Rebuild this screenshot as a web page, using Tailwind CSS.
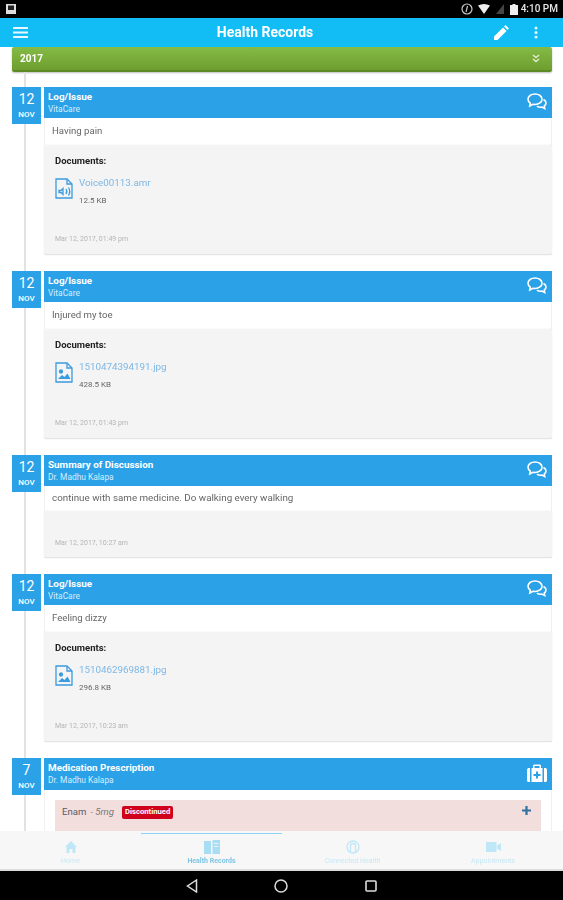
<!DOCTYPE html>
<html lang="en">
<head>
  <meta charset="UTF-8">
  <meta name="viewport" content="width=device-width, initial-scale=1.0">
  <title>Health Records</title>
  <script src="https://cdn.jsdelivr.net/npm/@tailwindcss/browser@4"></script>
</head>
<body class="bg-white overflow-hidden">
<div class="w-[563px] h-[900px] flex flex-col overflow-hidden font-['Roboto',sans-serif] text-[#555] blur-[0.5px]">

  <!-- status bar -->
  <div class="h-[18px] shrink-0 bg-black flex items-center justify-between pl-[5px] pr-[5px]">
    <svg width="12" height="12" viewBox="0 0 12 12"><path d="M1 1h10v10H1z" fill="#ddd"/><path d="M3 2.500h6v4.500H3z" fill="#222"/></svg>
    <div class="flex items-center text-[#e6e6e6]">
      <svg width="12" height="12" viewBox="0 0 12 12" fill="none" stroke="#ccc"><circle cx="6" cy="6" r="5" stroke-width="1.200"/><path d="M6.500 3 5 9" stroke-width="1.200"/></svg>
      <svg class="ml-[5px]" width="12" height="10" viewBox="0 0 12 10"><path d="M0 1.500Q6-1.500 12 1.500L6 10z" fill="#eee"/></svg>
      <svg class="ml-[6px]" width="8" height="10" viewBox="0 0 8 10"><path d="M0 10 8 0v10z" fill="#444"/></svg>
      <svg class="ml-[6px]" width="8" height="11" viewBox="0 0 8 11"><path d="M2.500 0h3v1H8v10H0V1h2.500z" fill="#eee"/></svg>
      <span class="ml-[3px] text-[10px] font-medium leading-none">4:10 PM</span>
    </div>
  </div>

  <!-- app bar -->
  <div class="h-[29px] shrink-0 bg-[#12bdf6] flex items-center pl-[13px] pr-[25px] relative">
    <svg width="15" height="11" viewBox="0 0 15 11" fill="#e8f8fe"><path d="M0 0h15v2H0zM0 4.500h15v2H0zM0 9h15v2H0z"/></svg>
    <div class="flex-1 text-center text-white font-bold text-[14px] pl-[8px]">Health Records</div>
    <svg width="15" height="15" viewBox="0 0 15 15" fill="#fff"><path d="M0 15V11.500L9 2.500 12.500 6 3.500 15zM10 1.500 11.500 0 15 3.500 13.500 5z"/></svg>
    <svg class="ml-[25px]" width="4" height="13" viewBox="0 0 4 13" fill="#e8f8fe"><circle cx="2" cy="2" r="1.500"/><circle cx="2" cy="6.500" r="1.500"/><circle cx="2" cy="11" r="1.500"/></svg>
  </div>

  <!-- scroll area -->
  <div class="flex-1 min-h-0 overflow-hidden pl-[12px] pr-[11px] relative">
    <div class="h-[25px] rounded-[2px] bg-gradient-to-b from-[#86bb46] to-[#6d9e2e] border-b-2 border-[#5d8a26] flex items-center justify-between pl-[8px] pr-[12px] shadow-[0_1px_2px_rgba(0,0,0,0.25)]">
      <span class="text-white text-[10px] font-bold">2017</span>
      <svg width="8" height="9" viewBox="0 0 8 9" fill="none" stroke="#dfeccb" stroke-width="1.500"><path d="M1 1l3 2.500L7 1M1 5l3 2.500L7 5"/></svg>
    </div>

    <div class="relative pt-[15px] flex flex-col gap-[16px]">
      <div class="absolute left-[12px] top-0 bottom-0 w-[2px] bg-[#e2e2e2]"></div>

      <!-- Voice note -->
      <div class="relative flex gap-[3px]">
        <div class="w-[29px] h-[37px] shrink-0 bg-[#2ba1e8] text-white flex flex-col items-center leading-none"><span class="text-[14px] mt-[5px]">12</span><span class="text-[8px] font-medium mt-[5px]">NOV</span></div>
        <div class="flex-1 min-w-0">
          <div class="h-[31px] bg-[#2ba1e8] flex items-center justify-between pl-[4px] pr-[5px] text-white">
            <div class="leading-none"><div class="text-[9.9px] font-bold">Log/Issue</div><div class="text-[8.4px] mt-[3px] text-[#d7eefc]">VitaCare</div></div>
            <svg class="mb-[2px]" width="20" height="17" viewBox="0 0 20 17" fill="none" stroke="#fff" stroke-width="1.600"><path d="M8 1C4 1 1 3.300 1 6.200c0 1.600 1 3 2.300 4L2.800 13l3.200-1.700c.7.100 1.300.2 2 .2 4 0 7-2.400 7-5.300S12 1 8 1z"/><path d="M16.500 6.500c1.500.8 2.500 2 2.500 3.500 0 1.200-.7 2.300-1.700 3l.4 2.500-2.800-1.400c-1.800.3-3.700-.1-5-1"/></svg>
          </div>
          <div class="h-[27px] bg-white flex items-center pl-[7px] text-[9.6px] text-[#666] border-x border-[#f0f0f0]">Having pain</div>
          <div class="h-[110px] bg-[#f4f4f4] rounded-b-[2px] border-b border-[#e4e4e4] pl-[11px] flex flex-col shadow-[0_0_1px_rgba(0,0,0,0.2)]">
            <div class="text-[9.5px] font-bold text-[#222] mt-[11px] leading-none">Documents:</div>
            <div class="flex mt-[12px]">
              <svg width="18" height="21" viewBox="0 0 18 21" fill="none" stroke="#3b9be0" stroke-width="1.300"><path d="M1 1h11l5 5v14H1z"/><path d="M12 1v5h5"/><path d="M4 12.500h2l2-2v6l-2-2H4zM11 11c1 1.500 1 3.500 0 5M13.500 9.500c1.500 2.500 1.500 5.500 0 8"/></svg>
              <div class="ml-[6px] leading-none"><div class="text-[9.8px] text-[#7db7e6]">Voice00113.amr</div><div class="text-[8px] text-[#666] mt-[10px]">12.5 KB</div></div>
            </div>
            <div class="text-[7px] text-[#b4b4b4] mt-[31px] leading-none">Mar 12, 2017, 01:49 pm</div>
          </div>
        </div>
      </div>

      <!-- Toe -->
      <div class="relative flex gap-[3px]">
        <div class="w-[29px] h-[37px] shrink-0 bg-[#2ba1e8] text-white flex flex-col items-center leading-none"><span class="text-[14px] mt-[5px]">12</span><span class="text-[8px] font-medium mt-[5px]">NOV</span></div>
        <div class="flex-1 min-w-0">
          <div class="h-[31px] bg-[#2ba1e8] flex items-center justify-between pl-[4px] pr-[5px] text-white">
            <div class="leading-none"><div class="text-[9.9px] font-bold">Log/Issue</div><div class="text-[8.4px] mt-[3px] text-[#d7eefc]">VitaCare</div></div>
            <svg class="mb-[2px]" width="20" height="17" viewBox="0 0 20 17" fill="none" stroke="#fff" stroke-width="1.600"><path d="M8 1C4 1 1 3.300 1 6.200c0 1.600 1 3 2.300 4L2.800 13l3.200-1.700c.7.100 1.300.2 2 .2 4 0 7-2.400 7-5.300S12 1 8 1z"/><path d="M16.500 6.500c1.500.8 2.500 2 2.500 3.500 0 1.200-.7 2.300-1.700 3l.4 2.500-2.800-1.400c-1.800.3-3.700-.1-5-1"/></svg>
          </div>
          <div class="h-[27px] bg-white flex items-center pl-[7px] text-[9.6px] text-[#666] border-x border-[#f0f0f0]">Injured my toe</div>
          <div class="h-[110px] bg-[#f4f4f4] rounded-b-[2px] border-b border-[#e4e4e4] pl-[11px] flex flex-col shadow-[0_0_1px_rgba(0,0,0,0.2)]">
            <div class="text-[9.5px] font-bold text-[#222] mt-[11px] leading-none">Documents:</div>
            <div class="flex mt-[12px]">
              <svg width="18" height="21" viewBox="0 0 18 21" fill="none" stroke="#3b9be0" stroke-width="1.300"><path d="M1 1h11l5 5v14H1z"/><path d="M12 1v5h5"/><circle cx="6" cy="9.500" r="1.500" fill="#3b9be0"/><path d="M3 17l4-4 2.500 2 3-3.500 3 5.500z" fill="#3b9be0" stroke="none"/></svg>
              <div class="ml-[6px] leading-none"><div class="text-[9.8px] text-[#7db7e6]">1510474394191.jpg</div><div class="text-[8px] text-[#666] mt-[10px]">428.5 KB</div></div>
            </div>
            <div class="text-[7px] text-[#b4b4b4] mt-[31px] leading-none">Mar 12, 2017, 01:43 pm</div>
          </div>
        </div>
      </div>

      <!-- Summary -->
      <div class="relative flex gap-[3px]">
        <div class="w-[29px] h-[37px] shrink-0 bg-[#2ba1e8] text-white flex flex-col items-center leading-none"><span class="text-[14px] mt-[5px]">12</span><span class="text-[8px] font-medium mt-[5px]">NOV</span></div>
        <div class="flex-1 min-w-0">
          <div class="h-[31px] bg-[#2ba1e8] flex items-center justify-between pl-[4px] pr-[5px] text-white">
            <div class="leading-none"><div class="text-[9.9px] font-bold">Summary of Discussion</div><div class="text-[8.4px] mt-[3px] text-[#d7eefc]">Dr. Madhu Kalapa</div></div>
            <svg class="mb-[2px]" width="20" height="17" viewBox="0 0 20 17" fill="none" stroke="#fff" stroke-width="1.600"><path d="M8 1C4 1 1 3.300 1 6.200c0 1.600 1 3 2.300 4L2.800 13l3.200-1.700c.7.100 1.300.2 2 .2 4 0 7-2.400 7-5.300S12 1 8 1z"/><path d="M16.500 6.500c1.500.8 2.500 2 2.500 3.500 0 1.200-.7 2.300-1.700 3l.4 2.500-2.800-1.400c-1.800.3-3.700-.1-5-1"/></svg>
          </div>
          <div class="h-[25px] bg-white flex items-center pl-[7px] text-[9.8px] text-[#666] border-x border-[#f0f0f0]">continue with same medicine. Do walking every walking</div>
          <div class="h-[47px] bg-[#f4f4f4] rounded-b-[2px] border-b border-[#e4e4e4] pl-[11px] flex flex-col shadow-[0_0_1px_rgba(0,0,0,0.2)]">
            <div class="text-[7px] text-[#b4b4b4] mt-[29px] leading-none">Mar 12, 2017, 10:27 am</div>
          </div>
        </div>
      </div>

      <!-- Dizzy -->
      <div class="relative flex gap-[3px]">
        <div class="w-[29px] h-[37px] shrink-0 bg-[#2ba1e8] text-white flex flex-col items-center leading-none"><span class="text-[14px] mt-[5px]">12</span><span class="text-[8px] font-medium mt-[5px]">NOV</span></div>
        <div class="flex-1 min-w-0">
          <div class="h-[31px] bg-[#2ba1e8] flex items-center justify-between pl-[4px] pr-[5px] text-white">
            <div class="leading-none"><div class="text-[9.9px] font-bold">Log/Issue</div><div class="text-[8.4px] mt-[3px] text-[#d7eefc]">VitaCare</div></div>
            <svg class="mb-[2px]" width="20" height="17" viewBox="0 0 20 17" fill="none" stroke="#fff" stroke-width="1.600"><path d="M8 1C4 1 1 3.300 1 6.200c0 1.600 1 3 2.300 4L2.800 13l3.200-1.700c.7.100 1.300.2 2 .2 4 0 7-2.400 7-5.300S12 1 8 1z"/><path d="M16.500 6.500c1.500.8 2.500 2 2.500 3.500 0 1.200-.7 2.300-1.700 3l.4 2.500-2.800-1.400c-1.800.3-3.700-.1-5-1"/></svg>
          </div>
          <div class="h-[27px] bg-white flex items-center pl-[7px] text-[9.6px] text-[#666] border-x border-[#f0f0f0]">Feeling dizzy</div>
          <div class="h-[110px] bg-[#f4f4f4] rounded-b-[2px] border-b border-[#e4e4e4] pl-[11px] flex flex-col shadow-[0_0_1px_rgba(0,0,0,0.2)]">
            <div class="text-[9.5px] font-bold text-[#222] mt-[11px] leading-none">Documents:</div>
            <div class="flex mt-[12px]">
              <svg width="18" height="21" viewBox="0 0 18 21" fill="none" stroke="#3b9be0" stroke-width="1.300"><path d="M1 1h11l5 5v14H1z"/><path d="M12 1v5h5"/><circle cx="6" cy="9.500" r="1.500" fill="#3b9be0"/><path d="M3 17l4-4 2.500 2 3-3.500 3 5.500z" fill="#3b9be0" stroke="none"/></svg>
              <div class="ml-[6px] leading-none"><div class="text-[9.8px] text-[#7db7e6]">1510462969881.jpg</div><div class="text-[8px] text-[#666] mt-[10px]">296.8 KB</div></div>
            </div>
            <div class="text-[7px] text-[#b4b4b4] mt-[31px] leading-none">Mar 12, 2017, 10:23 am</div>
          </div>
        </div>
      </div>

      <!-- Prescription -->
      <div class="relative flex gap-[3px]">
        <div class="w-[29px] h-[37px] shrink-0 bg-[#2ba1e8] text-white flex flex-col items-center leading-none"><span class="text-[14px] mt-[5px]">7</span><span class="text-[8px] font-medium mt-[5px]">NOV</span></div>
        <div class="flex-1 min-w-0">
          <div class="h-[32px] bg-[#2ba1e8] flex items-center justify-between pl-[4px] pr-[5px] text-white">
            <div class="leading-none"><div class="text-[9.9px] font-bold">Medication Prescription</div><div class="text-[8.4px] mt-[3px] text-[#d7eefc]">Dr. Madhu Kalapa</div></div>
            <svg class="mb-[2px]" width="20" height="18" viewBox="0 0 20 18" fill="#fff"><path d="M6 4V1.500L7 .500h6l1 1V4h-1.500V2h-5v2z"/><path d="M0 5.500 1 4h2v14H1l-1-1zM4.500 4h11v14h-11zM17 4h2l1 1.500V17l-1 1h-2z"/><path d="M9 7.500h2V10h2.500v2H11v2.500H9V12H6.500v-2H9z" fill="#2ba1e8"/></svg>
          </div>
          <div class="bg-white px-[10px] pt-[10px] h-[60px] border-x border-[#f0f0f0]">
            <div class="h-[50px] bg-[#f3dede] flex items-start justify-between pl-[7px] pr-[10px] pt-[5px]">
              <div class="flex items-center">
                <span class="text-[9.6px] text-[#555d6b]">Enam</span>
                <span class="text-[9.6px] text-[#777] italic ml-[4px]">- 5mg</span>
                <span class="ml-[8px] h-[13px] px-[3px] rounded-[2px] bg-[#d0021b] text-white text-[7.7px] font-bold flex items-center">Discontinued</span>
              </div>
              <svg class="mt-[1px]" width="9" height="9" viewBox="0 0 9 9" fill="#31709f"><path d="M3.400 0h2.200v3.400H9v2.200H5.600V9H3.400V5.600H0V3.400h3.400z"/></svg>
            </div>
          </div>
        </div>
      </div>
    </div>
  </div>

  <!-- bottom tabs -->
  <div class="h-[40px] shrink-0 bg-[#f7f7f7] border-b-2 border-[#ddd] flex relative z-10 pt-[2px]">
    <div class="w-[141px] flex flex-col items-center pt-[7px]">
      <div class="h-[14px] flex items-center"><svg width="12" height="12" viewBox="0 0 12 12" fill="#bfe7f8"><path d="M6 0 12 6h-1.500v6H7.500V8h-3v4H1.500V6H0z"/></svg></div>
      <span class="text-[7px] text-[#c6e8f6] mt-[4px] leading-none">Home</span>
    </div>
    <div class="w-[141px] flex flex-col items-center border-t border-[#8fd3f2] pt-[6px]">
      <div class="h-[14px] flex items-center"><svg width="16" height="14" viewBox="0 0 16 14" fill="#a8ddf3"><path d="M0 1h7v13H0zM8.500 0H16v14H8.500z"/><path d="M10 3h4.500v1H10zM10 6h4.500v1H10z" fill="#e4f5fc"/></svg></div>
      <span class="text-[7px] font-bold text-[#7fc6e5] mt-[4px] leading-none">Health Records</span>
    </div>
    <div class="w-[141px] flex flex-col items-center pt-[7px]">
      <div class="h-[14px] flex items-center"><svg width="14" height="14" viewBox="0 0 14 14" fill="none" stroke="#bfe7f8" stroke-width="1.300"><circle cx="7" cy="7" r="6"/><path d="M4.500 13V6a2.500 2.500 0 0 1 5 0v7"/></svg></div>
      <span class="text-[7px] text-[#c6e8f6] mt-[4px] leading-none">Connected Health</span>
    </div>
    <div class="w-[140px] flex flex-col items-center pt-[7px]">
      <div class="h-[14px] flex items-center"><svg width="15" height="10" viewBox="0 0 15 10" fill="#bfe7f8"><path d="M0 0h10.500v10H0zM11 3.500 15 1v8l-4-2.500z"/></svg></div>
      <span class="text-[7px] text-[#c6e8f6] mt-[4px] leading-none">Appointments</span>
    </div>
  </div>

  <!-- android nav -->
  <div class="h-[29px] shrink-0 bg-black flex items-center justify-center">
    <svg width="12" height="14" viewBox="0 0 12 14" fill="none" stroke="#ddd" stroke-width="1.500"><path d="M10.500 1 1.500 7l9 6z"/></svg>
    <svg class="ml-[76px]" width="14" height="14" viewBox="0 0 14 14" fill="none" stroke="#ddd" stroke-width="1.500"><circle cx="7" cy="7" r="6"/></svg>
    <svg class="ml-[77px]" width="12" height="12" viewBox="0 0 12 12" fill="none" stroke="#ddd" stroke-width="1.600"><rect x="1" y="1" width="10" height="10" rx="1"/></svg>
  </div>
</div>
</body>
</html>
